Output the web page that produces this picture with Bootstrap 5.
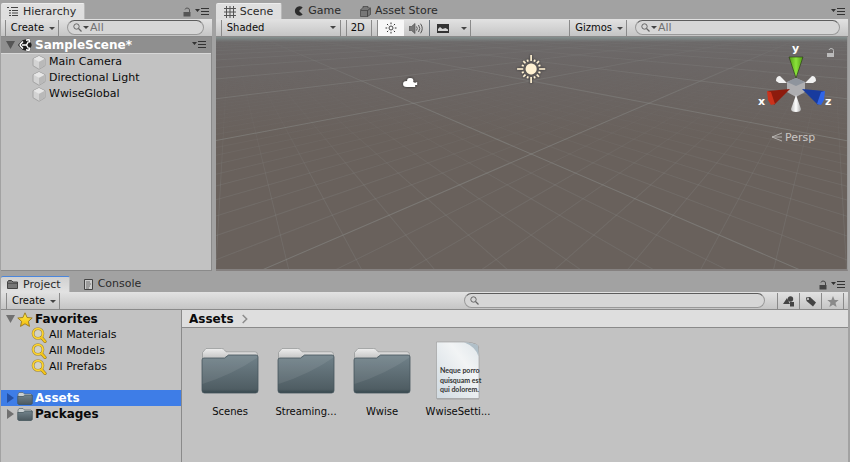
<!DOCTYPE html>
<html lang="en">
<head>
<meta charset="utf-8">
<meta name="viewport" content="width=device-width, initial-scale=1">
<title>SampleScene</title>
<link href="https://cdn.jsdelivr.net/npm/bootstrap@5.3.0/dist/css/bootstrap.min.css" rel="stylesheet">
<style>
:root{--edge:#8a8a8a;--panel:#c2c2c2;--bar:linear-gradient(#e2e2e2,#c5c5c5)}
body{font:11px/16px "DejaVu Sans",sans-serif;color:#0a0a0a;background:#a2a2a2;min-height:100vh;padding:3px 2px 0 1px;gap:5px}
svg{display:block;flex:none}
button,input,select{font-family:inherit;color:inherit}
button{border:0;background:none;padding:0;line-height:16px}
.top-area{display:grid;grid-template-columns:1fr 3fr;gap:4px;flex:268 0 0}
.bottom-area{flex:186 0 0}
.pane{min-width:0}
.tab-strip{height:16px}
.pane-tab{height:16px;padding:0 8px 0 6px;gap:5px;color:#2b2b2b;font-size:11px;border-radius:2px 2px 0 0}
.pane-tab.active{background:linear-gradient(#e0e0e0,#dedede);border-top:1px solid #ededed;border-right:1px solid #b9b9b9}
.pane-tab.focused{border-top:1px solid #4b86dc;background:linear-gradient(#d0d0d0,#e2e2e2)}
.scene-tabs .pane-tab{padding:0 8px}
.scene-tabs .pane-tab.active{gap:4px}
.scene-tabs .pane-tab:not(.active){gap:4px;padding-right:7px}
.strip-tools{gap:4px;padding-right:3px;margin-top:2px}
.tool-strip{height:18px;padding-top:1px;background:var(--bar);border-bottom:1px solid var(--edge);font-size:10px}
.tool-btn{height:16px;font-size:10px;border-right:1px solid var(--edge);padding:0 3px 0 5px;gap:5px}
.mode-btn{padding:0 6px 0 4px}
.lead-gap{width:6px;height:16px;border-right:1px solid var(--edge)}
.caret-s{width:0;height:0;border:3px solid transparent;border-top:3px solid #444;border-bottom:0}
.search-box{height:15px;border:1px solid #999;border-top:1px solid #5c5c5c;border-radius:8px;background:#d6d6d6;padding:0 5px;gap:1px;min-width:0}
.search-box input{border:0;background:none;outline:0;padding:0;min-width:0;width:100%;height:12px;font-size:11px;line-height:12px}
.search-box input::placeholder{color:#707070;opacity:1}
.tree-pane{background:var(--panel);border-right:1px solid var(--edge);border-bottom:1px solid var(--edge)}
.scene-head{height:17px;background:#8f8f8f;color:#fff;border-bottom:1px solid #d8d8d8;padding:0 5px;gap:3px;font-size:12px}
.tree-row{height:16px;gap:2px}
.child-row{padding-left:30px}
.bold-row{font-size:12px;font-weight:bold;padding-left:5px}
.bold-row.selected{background:#3e7de7;color:#fff}
.spacer-row{height:15px}
.view3d{background:linear-gradient(#84908f 0,#6c6969 5px,#6b6665 30px,#69615c 100px,#69615c 100%);border-right:1px solid #999;border-bottom:2px solid #858180;overflow:hidden;min-height:120px}
.view3d .ground{position:absolute;top:0;left:0;width:100%;height:100%}
.view3d .gizmo{position:absolute;top:0;right:0}
.icon-toggle{width:26px;height:16px}
.icon-toggle.on{background:#f7f7f7}
.shade-select{position:relative;width:119px;border-right:1px solid var(--edge);height:16px}
.shade-select select{appearance:none;border:0;background:none;width:100%;height:16px;font-size:10px;line-height:16px;padding:0 5px;outline:0}
.shade-select .caret-s{position:absolute;right:4px;top:6px;pointer-events:none}
.scene-search{width:205px}
.side-tree{width:181px;padding-top:1px;border-right:1px solid var(--edge);background:var(--panel)}
.path-bar{height:18px;background:#dedede;border-bottom:1px solid var(--edge);padding-left:7px;gap:8px;font-size:12px}
.asset-area{background:var(--panel);padding:11px 10px}
.asset-tile{width:76px;font-size:10px;line-height:16px}
.asset-tile svg{margin-bottom:1px}
.project-search{width:301px}
.filter-btn{width:22px;height:16px;border-left:1px solid var(--edge)}
</style>
<script src="https://cdn.jsdelivr.net/npm/bootstrap@5.3.0/dist/js/bootstrap.bundle.min.js"></script>
</head>
<body class="d-flex flex-column">
<svg width="0" height="0" class="position-absolute" aria-hidden="true">
<defs>
<linearGradient id="fold" x1="0" y1="0" x2="0" y2="1"><stop offset="0" stop-color="#71828a"/><stop offset=".9" stop-color="#4f5d63"/><stop offset="1" stop-color="#34454b"/></linearGradient>
<linearGradient id="flap" x1="0" y1="0" x2="0" y2="1"><stop offset="0" stop-color="#eee"/><stop offset="1" stop-color="#b5b5b5"/></linearGradient>
<linearGradient id="gold" x1="0" y1="0" x2="0" y2="1"><stop offset="0" stop-color="#fff04a"/><stop offset="1" stop-color="#f2b80c"/></linearGradient>
<linearGradient id="paper" x1="1" y1="0" x2="0" y2="1"><stop offset="0" stop-color="#dfe6ea"/><stop offset=".35" stop-color="#f2f4f5"/><stop offset="1" stop-color="#d0dae1"/></linearGradient>
<symbol id="menu" viewBox="0 0 14 8"><path d="M0 1h5L2.500 4zM6 0h8v1H6zM6 3h8v1H6zM6 6h8v1H6z" fill="#333"/></symbol>
<symbol id="lock" viewBox="0 0 8 10"><path d="M.5 5h7v4.500h-7z" fill="currentColor"/><path d="M2 2.500Q2.500 1 4 1q2.500 0 2.500 2v2" fill="none" stroke="currentColor"/></symbol>
<symbol id="cube" viewBox="0 0 14 15"><path d="M7 .7 13 3.700v7L7 14.300 1 10.700v-7z" fill="#d3d3d3" stroke="#999" stroke-width=".8"/><path d="M7 .9 12.500 3.800 7 6.800 1.500 3.800z" fill="#e7e7e7"/><path d="M7 7v7l5.500-3.500V4z" fill="#b9b9b9"/></symbol>
<symbol id="lens" viewBox="0 0 16 16"><circle cx="7" cy="6.500" r="4.900" fill="#d2d2c8" stroke="#a08a4a" stroke-width="2.800"/><path d="m10.500 10.500 3.500 4" stroke="#8d7428" stroke-width="3.200" stroke-linecap="round"/><circle cx="7" cy="6.500" r="4.900" fill="none" stroke="#ffd62b" stroke-width="1.600"/><path d="m10.500 10.500 3.500 4" stroke="#f5c61b" stroke-width="2" stroke-linecap="round"/></symbol>
<symbol id="find" viewBox="0 0 9 9"><circle cx="3.500" cy="3.500" r="2.700" fill="none" stroke="#666"/><path d="m5.500 5.500 3 3" stroke="#666" stroke-width="1.300"/></symbol>
<symbol id="small-folder" viewBox="0 0 16 13"><path d="M1 4V2l1-1.500h4L7.500 2H14l1 1v2H1z" fill="#c9d0d2" stroke="#59666b" stroke-width=".7"/><path d="M.7 4.500h5.500L7.500 3.300H15.300V11.500l-1 1H1.700l-1-1z" fill="url(#fold)" stroke="#42545a" stroke-width=".7"/></symbol>
<symbol id="big-folder" viewBox="0 0 60 50"><path d="M2.500 14V6.500L6 2.500h15.500q2 0 3 1.500l1.500 1.800H55q2.500 0 2.500 2.700V16h-55z" fill="url(#flap)" stroke="#919494" stroke-width=".7"/><path d="M2 14q0-2 2-2h20.500l4-3H56q2 0 2 2v33.500q0 2.500-2.500 2.500h-51Q2 47 2 44.500z" fill="url(#fold)" stroke="#46575e" stroke-width=".8"/><path d="M2.500 38V14q0-1.500 2-1.500H25l4-3h27q1.500 0 1.500 2Q34 28 2.500 38z" fill="#fff" fill-opacity=".08"/></symbol>
</defs>
</svg>

<main class="top-area">
  <section class="pane d-flex flex-column" aria-label="Hierarchy">
    <div class="tab-strip d-flex">
      <button class="pane-tab active d-flex align-items-center"><svg width="11" height="9" viewBox="0 0 11 9"><path d="M0 .5h2M4 .5h7M2 3.500h2M5 3.500h6M2 6h2M5 6h6M2 8.500h2M5 8.500h6" stroke="#444"/></svg>Hierarchy</button>
      <div class="strip-tools d-flex align-items-center ms-auto"><button aria-label="Lock"><svg width="8" height="10" color="#555"><use href="#lock"/></svg></button><button aria-label="Hierarchy menu"><svg width="14" height="8"><use href="#menu"/></svg></button></div>
    </div>
    <div class="tool-strip d-flex">
      <span class="lead-gap"></span>
      <button class="tool-btn d-flex align-items-center">Create <span class="caret-s"></span></button>
      <label class="search-box d-flex align-items-center flex-fill mx-2"><svg width="9" height="9"><use href="#find"/></svg><span class="caret-s"></span><input type="text" placeholder="All" aria-label="Search hierarchy"></label>
    </div>
    <div class="tree-pane flex-fill">
      <div class="scene-head d-flex align-items-center">
        <svg width="9" height="8" viewBox="0 0 9 8"><path d="M0 0h9L4.500 8z" fill="#555"/></svg>
        <svg width="14" height="14" viewBox="0 0 14 14"><path d="M0 7 4.500 2.200 11.500.3 13.700 7l-2.200 6.700-7-1.900z" fill="#1c1c1c"/><path d="M1.800 7 5 3.500M8 2.300l3-.8.9 3M1.800 7 5 10.500M8 11.700l3 .8.900-3M4 7h4.500M8.500 7l2-3.500M8.500 7l2 3.500" fill="none" stroke="#fff" stroke-width="1.500"/></svg>
        <strong>SampleScene*</strong>
        <button class="ms-auto" aria-label="Scene menu"><svg width="14" height="8"><use href="#menu"/></svg></button>
      </div>
      <div class="tree-row child-row d-flex align-items-center"><svg width="16" height="15"><use href="#cube"/></svg>Main Camera</div>
      <div class="tree-row child-row d-flex align-items-center"><svg width="16" height="15"><use href="#cube"/></svg>Directional Light</div>
      <div class="tree-row child-row d-flex align-items-center"><svg width="16" height="15"><use href="#cube"/></svg>WwiseGlobal</div>
    </div>
  </section>

  <section class="pane d-flex flex-column" aria-label="Scene">
    <div class="tab-strip scene-tabs d-flex">
      <button class="pane-tab active d-flex align-items-center"><svg width="12" height="12" viewBox="0 0 12 12"><path d="M2.500 0v12M6 0v12M9.500 0v12M0 2.500h12M0 6h12M0 9.500h12" stroke="#555"/></svg>Scene</button>
      <button class="pane-tab d-flex align-items-center ms-1"><svg width="10" height="10" viewBox="0 0 10 10"><path d="M8.700 1.500A4.700 4.700 0 1 0 8.700 8.500L5 5z" fill="#2c2c2c"/></svg>Game</button>
      <button class="pane-tab d-flex align-items-center ms-1"><svg width="11" height="11" viewBox="0 0 11 11"><path d="M.5 4.500h7v6h-7zM7.500 4.500l3-2v6l-3 2z" fill="#777" stroke="#444" stroke-width=".7"/><path d="m.5 4 2-2h8l-2.500 2zM3 2V.5h5V2" fill="#999" stroke="#444" stroke-width=".8"/></svg>Asset Store</button>
      <div class="strip-tools d-flex align-items-center ms-auto"><button aria-label="Scene panel menu"><svg width="14" height="8"><use href="#menu"/></svg></button></div>
    </div>
    <div class="tool-strip d-flex">
      <span class="lead-gap"></span>
      <div class="shade-select"><select aria-label="Draw mode"><option>Shaded</option></select><span class="caret-s"></span></div>
      <span class="lead-gap"></span>
      <button class="tool-btn mode-btn">2D</button>
      <span class="lead-gap"></span>
      <button class="icon-toggle on d-flex align-items-center justify-content-center" aria-label="Lighting"><svg width="12" height="12" viewBox="0 0 12 12"><circle cx="6" cy="6" r="2" fill="none" stroke="#444"/><path d="M6 .5v1.700M6 9.800v1.700M.5 6h1.700M9.800 6h1.700M2 2l1.200 1.200M8.800 8.800 10 10M10 2 8.800 3.200M3.200 8.800 2 10" stroke="#333"/></svg></button>
      <button class="icon-toggle d-flex align-items-center justify-content-center border-end border-secondary" aria-label="Audio"><svg width="14" height="11" viewBox="0 0 14 11"><path d="M0 3.500h2.500L6 .5v10l-3.500-3H0z" fill="#777" stroke="#555" stroke-width=".7"/><path d="M7.500 3.500q1.500 2 0 4M9.500 2q2.500 3.500 0 7M11.500.7q3.500 4.800 0 9.600" fill="none" stroke="#555"/></svg></button>
      <button class="icon-toggle d-flex align-items-center justify-content-center" aria-label="Effects"><svg width="12" height="9" viewBox="0 0 12 9"><path d="M0 0h12v9H0z" fill="#333"/><path d="M1 7V5l2-2 2.500 2 3-1L11 5.500V7z" fill="#d5d5d5"/></svg></button>
      <button class="tool-btn d-flex align-items-center" aria-label="Effects menu"><span class="caret-s"></span></button>
      <span class="lead-gap ms-auto"></span>
      <button class="tool-btn d-flex align-items-center">Gizmos <span class="caret-s"></span></button>
      <label class="search-box scene-search d-flex align-items-center mx-2"><svg width="9" height="9"><use href="#find"/></svg><span class="caret-s"></span><input type="text" placeholder="All" aria-label="Search scene"></label>
    </div>
    <div class="view3d position-relative flex-fill">
      <svg class="ground" viewBox="0 0 631 234" preserveAspectRatio="xMidYMid slice">
        <defs>
          <linearGradient id="near" gradientUnits="userSpaceOnUse" x1="0" y1="20" x2="0" y2="150"><stop offset="0" stop-color="#000"/><stop offset=".5" stop-color="#444"/><stop offset="1" stop-color="#eee"/></linearGradient>
          <linearGradient id="far" gradientUnits="userSpaceOnUse" x1="0" y1="0" x2="0" y2="100"><stop offset="0" stop-color="#111"/><stop offset=".5" stop-color="#aaa"/><stop offset="1" stop-color="#fff"/></linearGradient>
          <mask id="near-mask" maskUnits="userSpaceOnUse" x="-400" y="0" width="1500" height="400"><path d="M-400 0h1500v400H-400z" fill="url(#near)"/></mask>
          <mask id="far-mask" maskUnits="userSpaceOnUse" x="-400" y="0" width="1500" height="400"><path d="M-400 0h1500v400H-400z" fill="url(#far)"/></mask>
          <filter id="dim" x="-30%" y="-30%" width="160%" height="160%"><feDropShadow dx="0" dy="0" stdDeviation="1.200" flood-color="#222"/></filter>
        </defs>
        <g id="minor" mask="url(#near-mask)"></g>
        <g id="major" mask="url(#far-mask)"></g>
        <g filter="url(#dim)">
          <path d="M187 48q0-3 4-3 0-3 3-3 4 0 3 4l2 1 2-1v3h-2v2h-8q-4 0-4-3z" fill="#fff"/>
          <circle cx="315" cy="33" r="5.500" fill="#fff1d2"/>
          <path id="rays" d="" stroke="#fff1d2" stroke-width="1.600"/>
        </g>
      </svg>
      <svg class="gizmo" width="107" height="119" viewBox="0 2 107 119" font-family="DejaVu Sans, sans-serif">
        <defs>
          <linearGradient id="gy"><stop offset="0" stop-color="#4f9a15"/><stop offset=".5" stop-color="#8be33a"/><stop offset="1" stop-color="#4f9a15"/></linearGradient>
          <linearGradient id="gw"><stop offset="0" stop-color="#bbb"/><stop offset=".5" stop-color="#fff"/><stop offset="1" stop-color="#aaa"/></linearGradient>
        </defs>
        <path d="M49 22h14l-7 21z" fill="url(#gy)" stroke="#253313" stroke-width=".6"/>
        <path d="m47 48-7-7q-4 0-4 5l3 2zM65 48l7-7q4 0 4 5l-3 2z" fill="#f1f1f1"/>
        <path d="m56 43 9 4v10l-9 5-9-5V47z" fill="#aeaeb1"/><path d="m56 43 9 4-9 4-9-4z" fill="#8e949d"/>
        <path d="m56 60-5 14q0 3 5 3t5-3z" fill="url(#gw)"/>
        <path d="M50 54 28 56l6 14z" fill="#8d1b0d"/><path d="m27 56 4 1 4 12-4 1-3-5z" fill="#cb321b"/>
        <path d="m62 54 22 2-6 14z" fill="#183b9e"/><path d="m85 56-4 1-4 12 4 1 3-5z" fill="#2f65e8"/>
        <g fill="#fff" font-size="11" font-weight="bold"><text x="52" y="17">y</text><text x="18" y="70">x</text><text x="85" y="70">z</text></g>
        <path d="m42 98-10 4 10 4M32 102h10" fill="none" stroke="#b5b2af" stroke-width="1"/>
        <text x="45" y="106" font-size="11" fill="#c9c6c4">Persp</text>
        <path d="M87 18h7v4h-7z" fill="#bbb"/><path d="M89 15q.5-1.500 2-1.500 2.500 0 2.500 2V18" fill="none" stroke="#bbb"/>
      </svg>
    </div>
  </section>
</main>

<section class="bottom-area pane d-flex flex-column" aria-label="Project">
  <div class="tab-strip d-flex">
    <button class="pane-tab active focused d-flex align-items-center"><svg width="11" height="9" viewBox="0 0 11 9"><path d="M.5 8.500V2l1-1.500h3L6 2h4.500v6.500z" fill="#777" stroke="#444"/><path d="M1 3.500h9" stroke="#555"/></svg>Project</button>
    <button class="pane-tab d-flex align-items-center ms-2"><svg width="9" height="11" viewBox="0 0 9 11"><path d="M.5.5h8v10h-8z" fill="#ccc" stroke="#444"/><path d="M2 3h4M2 5h5M2 7h4M2 9h3" stroke="#555" stroke-width=".8"/></svg>Console</button>
    <div class="strip-tools d-flex align-items-center ms-auto"><button aria-label="Lock project"><svg width="8" height="10" color="#444"><use href="#lock"/></svg></button><button aria-label="Project menu"><svg width="14" height="8"><use href="#menu"/></svg></button></div>
  </div>
  <div class="tool-strip d-flex">
    <span class="lead-gap"></span>
    <button class="tool-btn d-flex align-items-center">Create <span class="caret-s"></span></button>
    <label class="search-box project-search d-flex align-items-center ms-auto me-2"><svg width="9" height="9"><use href="#find"/></svg><input type="text" aria-label="Search project"></label>
    <button class="filter-btn d-flex align-items-center justify-content-center ms-1" aria-label="Search by type"><svg width="12" height="11" viewBox="0 0 12 11"><path d="M0 8 4 2l3 6zM7 6h4v4.500H7z" fill="#444"/><circle cx="7.500" cy="3" r="2.700" fill="#444"/></svg></button>
    <button class="filter-btn d-flex align-items-center justify-content-center" aria-label="Search by label"><svg width="12" height="11" viewBox="0 0 12 11"><path d="M1 1.500 5 1l6 5.500L8 10.500 1.500 5z" fill="#444"/><circle cx="3" cy="3" r="1" fill="#ddd"/></svg></button>
    <button class="filter-btn d-flex align-items-center justify-content-center" aria-label="Save search"><svg width="12" height="11" viewBox="0 0 12 11"><path d="m6 0 1.600 3.900 4.100.2-3.200 2.600L9.600 11 6 8.700 2.400 11l1.100-4.300L.3 4.100l4.100-.2z" fill="#8a8a8a"/></svg></button>
    <span class="filter-btn w-auto pe-1"></span>
  </div>
  <div class="d-flex flex-fill">
    <nav class="side-tree flex-shrink-0" aria-label="Project folders">
      <div class="tree-row bold-row d-flex align-items-center"><svg width="9" height="8" viewBox="0 0 9 8"><path d="M0 0h9L4.500 8z" fill="#707070"/></svg><svg width="16" height="15" viewBox="0 0 16 15"><path d="m8 .8 2.100 4.700 5.100.5-3.800 3.400 1.100 5L8 11.800l-4.500 2.600 1.100-5L.8 6l5.100-.5z" fill="url(#gold)" stroke="#98781b" stroke-width=".9"/></svg>Favorites</div>
      <div class="tree-row child-row d-flex align-items-center"><svg width="16" height="16"><use href="#lens"/></svg>All Materials</div>
      <div class="tree-row child-row d-flex align-items-center"><svg width="16" height="16"><use href="#lens"/></svg>All Models</div>
      <div class="tree-row child-row d-flex align-items-center"><svg width="16" height="16"><use href="#lens"/></svg>All Prefabs</div>
      <div class="spacer-row"></div>
      <div class="tree-row bold-row selected d-flex align-items-center"><svg width="9" height="10" viewBox="0 0 9 10"><path d="M1 0v10l7-5z" fill="#2450a5"/></svg><svg width="16" height="13"><use href="#small-folder"/></svg>Assets</div>
      <div class="tree-row bold-row d-flex align-items-center"><svg width="9" height="10" viewBox="0 0 9 10"><path d="M1 0v10l7-5z" fill="#707070"/></svg><svg width="16" height="13"><use href="#small-folder"/></svg>Packages</div>
    </nav>
    <div class="d-flex flex-column flex-fill pane">
      <div class="path-bar d-flex align-items-center"><strong>Assets</strong><svg width="6" height="10" viewBox="0 0 6 10"><path d="m.7 1 4 4-4 4" fill="none" stroke="#8c8c8c" stroke-width="1.500"/></svg></div>
      <div class="asset-area d-flex flex-wrap flex-fill align-content-start">
        <div class="asset-tile d-flex flex-column align-items-center"><svg width="60" height="64" viewBox="0 -7 60 64"><use href="#big-folder" width="60" height="50"/></svg>Scenes</div>
        <div class="asset-tile d-flex flex-column align-items-center"><svg width="60" height="64" viewBox="0 -7 60 64"><use href="#big-folder" width="60" height="50"/></svg>Streaming...</div>
        <div class="asset-tile d-flex flex-column align-items-center"><svg width="60" height="64" viewBox="0 -7 60 64"><use href="#big-folder" width="60" height="50"/></svg>Wwise</div>
        <div class="asset-tile d-flex flex-column align-items-center"><svg width="60" height="64" viewBox="0 0 60 64"><path d="M9 3.500h33q8 .5 9 5v52H9z" fill="#888" opacity=".5"/><path d="M8.500 3H36q10 .5 14 3.500l1 11V59.500H8.500z" fill="url(#paper)" stroke="#999" stroke-width=".6"/><path d="M36 3.300Q46 4 50 6.500l.5 11Q48 8 36 3.300z" fill="#b0bfc8"/><g font-family="Lato, sans-serif" font-size="7" font-weight="bold" fill="#333"><text x="12" y="34">Neque porro</text><text x="12" y="44">quisquam est</text><text x="12" y="53">qui dolorem.</text></g></svg>WwiseSetti...</div>
      </div>
    </div>
  </div>
</section>
<script>
// Ground grid: a plane turned 45 degrees, projected onto the view.
const NS='http://www.w3.org/2000/svg',B=.064;
const project=(i,j)=>{const w=1+B*(i+j);return [315+19.3*(i-j)/w,-12+130/w]};
function rule(c,flip,major){
  const a=-.65/B-c,b=8/B-c,p=flip?project(a,c):project(c,a),q=flip?project(b,c):project(c,b);
  const l=document.createElementNS(NS,'line');
  l.setAttribute('x1',p[0]);l.setAttribute('y1',p[1]);l.setAttribute('x2',q[0]);l.setAttribute('y2',q[1]);
  l.setAttribute('stroke','#969a99');l.setAttribute('stroke-opacity',major?.4:.2);
  document.getElementById(major?'major':'minor').appendChild(l);
}
for(let c=-30;c<=45;c++)if(c%10)for(const f of[0,1])rule(c,f,false);
for(let c=-100;c<=120;c+=10)for(const f of[0,1])rule(c,f,true);
let d='';
for(let k=0;k<16;k++){const t=k*Math.PI/8,r=k%4===0?14:k%2===0?11:10;d+=`M${315+8*Math.cos(t)} ${33+8*Math.sin(t)}L${315+r*Math.cos(t)} ${33+r*Math.sin(t)}`}
document.getElementById('rays').setAttribute('d',d);
</script>
</body>
</html>
